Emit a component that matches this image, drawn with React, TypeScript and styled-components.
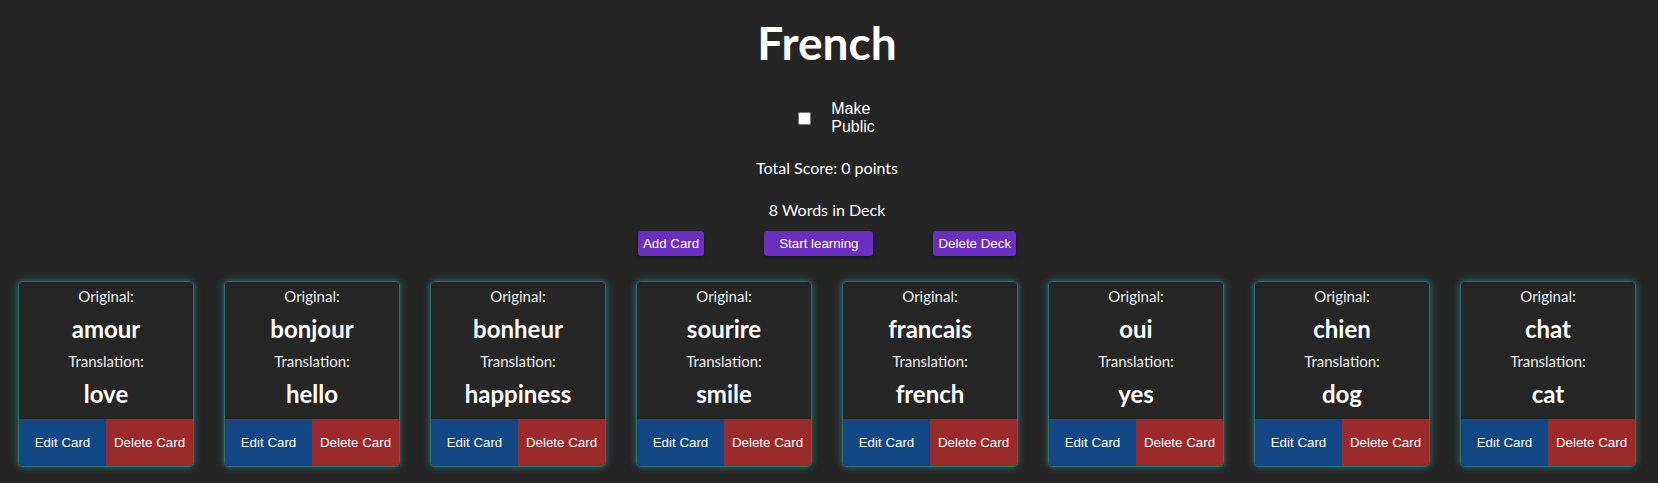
import React from "react";
import styled, { createGlobalStyle } from "styled-components";

const GlobalStyle = createGlobalStyle`
  html, body {
    margin: 0;
    padding: 0;
    background: #252525;
  }
  body {
    color: #ffffff;
    font-family: Lato, "Noto Sans", sans-serif;
  }
`;

const Page = styled.div`
  display: flex;
  flex-direction: column;
  align-items: center;
  padding: 13px 4px 16px 0;
`;

const Title = styled.h1`
  margin: 0;
  font-family: Lato, sans-serif;
  font-weight: 700;
  font-size: 46px;
  line-height: 60px;
`;

const PublicRow = styled.label`
  display: flex;
  align-items: center;
  gap: 20px;
  margin-top: 27px;
  padding-left: 19px;
  font-family: "Liberation Sans", Arial, sans-serif;
  font-size: 16px;
  line-height: 18px;
`;

const Check = styled.input`
  width: 13px;
  height: 13px;
  margin: 0;
`;

const PublicText = styled.span`
  width: min-content;
`;

const Info = styled.p<{ $top: number }>`
  margin: ${(p) => p.$top}px 0 0;
  font-family: Lato, sans-serif;
  font-size: 16px;
  line-height: 19px;
`;

const Actions = styled.div`
  display: flex;
  gap: 60px;
  margin-top: 12px;
`;

const ActionButton = styled.button<{ $pad: number }>`
  height: 25px;
  padding: 0 ${(p) => p.$pad}px;
  border: none;
  border-radius: 3px;
  background: #6a2ec0;
  color: #ffffff;
  font-family: "Liberation Sans", Arial, sans-serif;
  font-size: 13.333px;
  box-shadow: 0 2px 4px rgba(0, 0, 0, 0.35);
  cursor: pointer;
`;

const CardGrid = styled.div`
  display: flex;
  justify-content: center;
  gap: 30px;
  margin-top: 25px;
`;

const Card = styled.div`
  width: 176px;
  display: flex;
  flex-direction: column;
  border: 1px solid #2a6f6c;
  border-radius: 5px;
  overflow: hidden;
  box-shadow: 0 0 7px rgba(45, 150, 145, 0.75);
  box-sizing: border-box;
  background: #262626;
`;

const CardBody = styled.div`
  display: flex;
  flex-direction: column;
  align-items: center;
  gap: 7.5px;
  padding: 4px 0 10.5px;
  border-radius: 0 0 4px 4px;
  background: #262626;
`;

const Label = styled.div`
  font-family: Lato, sans-serif;
  font-size: 15px;
  line-height: 20px;
  color: #ececec;
`;

const Word = styled.div`
  font-family: Lato, sans-serif;
  font-weight: 700;
  font-size: 24px;
  line-height: 30px;
  color: #ffffff;
`;

const CardFooter = styled.div`
  display: grid;
  grid-template-columns: 1fr 1fr;
  height: 47px;
`;

const FooterButton = styled.button<{ $variant: "edit" | "delete" }>`
  border: none;
  margin: 0;
  padding: 0;
  background: ${(p) => (p.$variant === "edit" ? "#134785" : "#9b2a2b")};
  color: #ffffff;
  font-family: "Liberation Sans", Arial, sans-serif;
  font-size: 13.333px;
  cursor: pointer;
`;

const cards = [
  ["amour", "love"],
  ["bonjour", "hello"],
  ["bonheur", "happiness"],
  ["sourire", "smile"],
  ["francais", "french"],
  ["oui", "yes"],
  ["chien", "dog"],
  ["chat", "cat"],
];

export default function App() {
  return (
    <>
      <GlobalStyle />
      <Page>
        <Title>French</Title>
        <PublicRow>
          <Check type="checkbox" />
          <PublicText>Make Public</PublicText>
        </PublicRow>
        <Info $top={22}>Total Score: 0 points</Info>
        <Info $top={23}>8 Words in Deck</Info>
        <Actions>
          <ActionButton $pad={5}>Add Card</ActionButton>
          <ActionButton $pad={15}>Start learning</ActionButton>
          <ActionButton $pad={5}>Delete Deck</ActionButton>
        </Actions>
        <CardGrid>
          {cards.map(([orig, trans]) => (
            <Card key={orig}>
              <CardBody>
                <Label>Original:</Label>
                <Word>{orig}</Word>
                <Label>Translation:</Label>
                <Word>{trans}</Word>
              </CardBody>
              <CardFooter>
                <FooterButton $variant="edit">Edit Card</FooterButton>
                <FooterButton $variant="delete">Delete Card</FooterButton>
              </CardFooter>
            </Card>
          ))}
        </CardGrid>
      </Page>
    </>
  );
}
